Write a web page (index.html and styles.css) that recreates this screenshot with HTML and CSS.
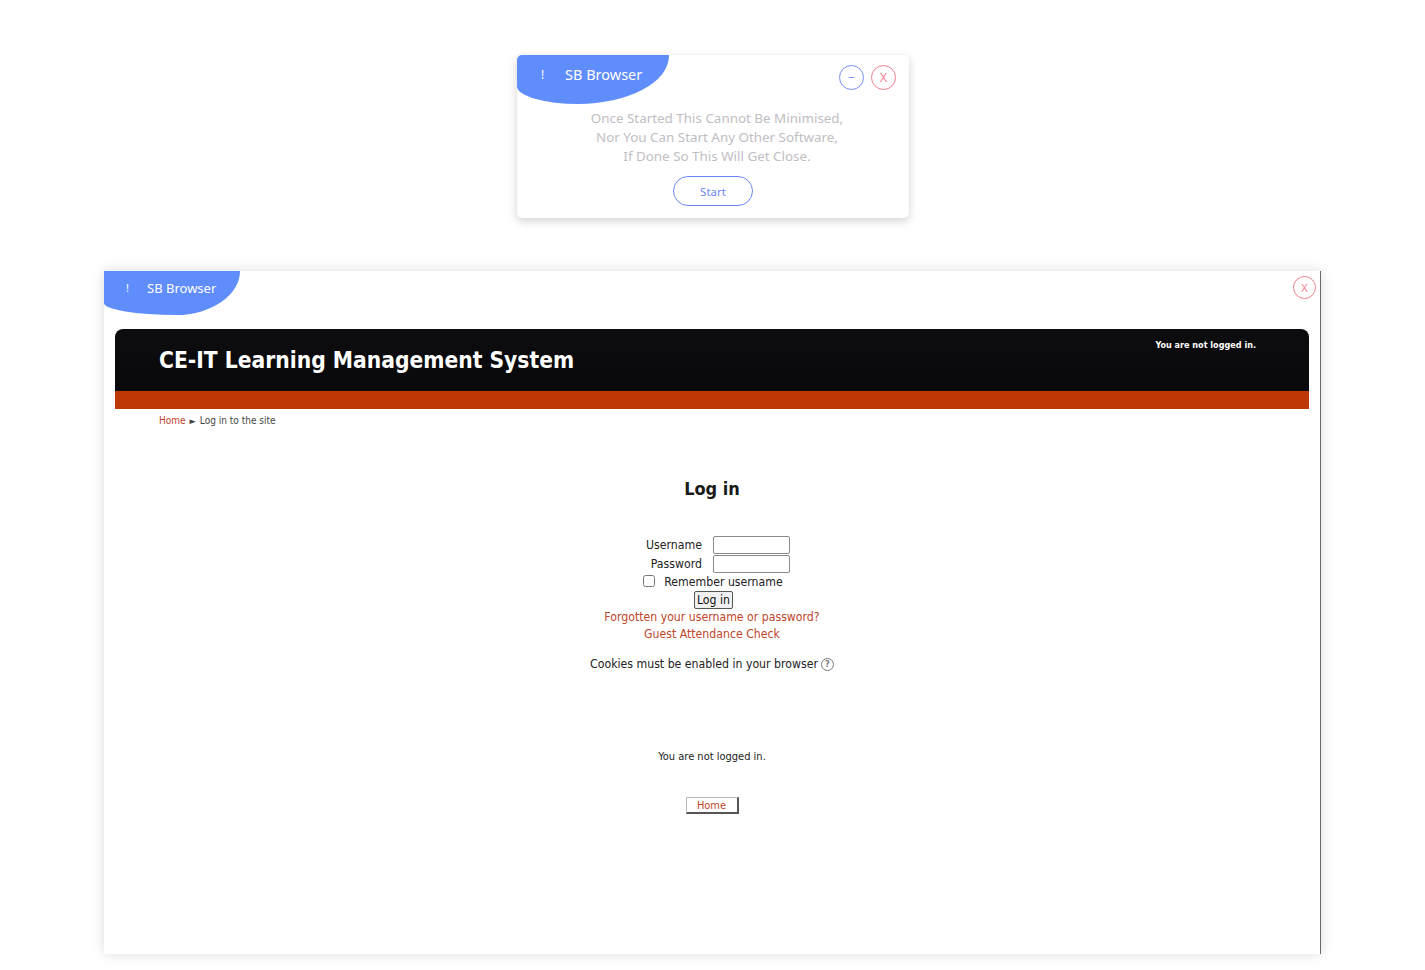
FILE: index.html
```html
<!DOCTYPE html>
<html lang="en">
<head>
<meta charset="utf-8">
<title>SB Browser</title>
<link rel="stylesheet" href="styles.css">
</head>
<body>
<div class="stage">
  <section class="dlg dlg-start">
    <div class="bar">
      <div class="brand brand-lg"><span class="bang">!</span><span class="brand-name">SB Browser</span></div>
      <div class="ctrls">
        <span class="cbtn cbtn-min">&minus;</span>
        <span class="cbtn cbtn-close">X</span>
      </div>
    </div>
    <p class="warn">Once Started This Cannot Be Minimised,<br>Nor You Can Start Any Other Software,<br>If Done So This Will Get Close.</p>
    <div class="start-row"><button class="start-btn">Start</button></div>
  </section>

  <section class="dlg dlg-main">
    <div class="bar bar-main">
      <div class="brand brand-sm"><span class="bang">!</span><span class="brand-name">SB Browser</span></div>
      <div class="ctrls ctrls-main">
        <span class="cbtn cbtn-close cbtn-sm">X</span>
      </div>
    </div>
    <div class="page">
      <header class="site-head">
        <div class="site-top">
          <h1 class="site-title">CE-IT Learning Management System</h1>
          <div class="site-login">You are not logged in.</div>
        </div>
        <div class="site-band"></div>
      </header>
      <nav class="crumbs"><a class="crumb-link">Home</a><span class="crumb-sep">&#9658;</span><span>Log in to the site</span></nav>
      <main class="content">
        <h2 class="login-title">Log in</h2>
        <form class="login-form">
          <div class="fields">
            <label class="flabel">Username</label><input class="finput" type="text">
            <label class="flabel">Password</label><input class="finput" type="password">
          </div>
          <label class="remember"><input type="checkbox" class="rcheck"><span>Remember username</span></label>
          <div class="submit-row"><button type="button" class="login-btn">Log in</button></div>
          <a class="olink">Forgotten your username or password?</a>
          <a class="olink">Guest Attendance Check</a>
          <p class="cookies">Cookies must be enabled in your browser <span class="help">?</span></p>
        </form>
        <p class="foot-login">You are not logged in.</p>
        <div class="home-row"><button class="home-btn">Home</button></div>
      </main>
    </div>
  </section>
</div>
</body>
</html>
```

FILE: styles.css
```css
html, body {
  margin: 0;
  padding: 0;
  background: #ffffff;
}
body {
  width: 1425px;
  height: 970px;
  overflow: hidden;
  font-family: "Noto Sans", "Open Sans", sans-serif;
}
.stage {
  display: flex;
  flex-direction: column;
  align-items: flex-start;
}
.dlg {
  background: #fff;
  overflow: hidden;
  box-sizing: border-box;
}
.dlg-start {
  margin: 55px 0 0 517px;
  width: 392px;
  height: 163px;
  border-radius: 5px;
  box-shadow: 0 3px 10px rgba(0, 0, 0, 0.18);
}
.dlg-main {
  margin: 53px 0 0 104px;
  width: 1217px;
  height: 683px;
  border-right: 1px solid #6a6a6a;
  box-shadow: 0 0 12px rgba(0, 0, 0, 0.14);
}
.bar {
  display: flex;
  justify-content: space-between;
  align-items: flex-start;
}
.brand {
  background: #5f8dfc;
  color: #fff;
  display: flex;
  align-items: flex-start;
  box-sizing: border-box;
}
.brand-lg {
  width: 152px;
  height: 49px;
  border-radius: 0 0 92px 62px / 0 0 49px 18px;
  padding: 10px 0 0 24px;
  font-size: 14.5px;
  line-height: 19px;
}
.brand-lg .bang { width: 24px; font-size: 12px; }
.brand-sm {
  width: 136px;
  height: 44px;
  border-radius: 0 0 64px 72px / 0 0 44px 12px;
  padding: 8px 0 0 22px;
  font-size: 13px;
  line-height: 18px;
}
.brand-sm .bang { width: 21px; font-size: 11px; }
.ctrls {
  display: flex;
  gap: 7px;
  padding: 10px 13px 0 0;
}
.ctrls-main { padding: 5px 4px 0 0; }
.cbtn {
  width: 25px;
  height: 25px;
  box-sizing: border-box;
  border-radius: 50%;
  display: flex;
  align-items: center;
  justify-content: center;
  font-size: 12px;
  font-family: "Noto Sans", sans-serif;
}
.cbtn-min {
  border: 1.5px solid #7c8ff8;
  color: #7c8ff8;
}
.cbtn-close {
  border: 1.5px solid #f0808f;
  color: #f0808f;
}
.cbtn-sm {
  width: 23px;
  height: 23px;
  font-size: 11px;
}
.warn {
  margin: 5px 0 0;
  padding-left: 8px;
  text-align: center;
  color: #bfbec3;
  font-size: 13.4px;
  line-height: 19px;
}
.start-row {
  display: flex;
  justify-content: center;
  padding-top: 10px;
}
.start-btn {
  width: 80px;
  height: 30px;
  border: 1px solid #6d87f6;
  border-radius: 15px;
  background: #fff;
  color: #6d87f6;
  font-family: "Noto Sans", sans-serif;
  font-size: 11.5px;
  padding: 0;
}

/* page */
.page {
  padding: 14px 11px 0;
  font-family: "DejaVu Sans Condensed", "DejaVu Sans", sans-serif;
  font-stretch: condensed;
}
.site-top {
  height: 62px;
  background: linear-gradient(180deg, #0d0c0e 0%, #09080a 100%);
  border-radius: 8px 8px 0 0;
  display: flex;
  justify-content: space-between;
  align-items: flex-start;
  padding: 0 53px 0 44px;
}
.site-title {
  margin: 17px 0 0;
  color: #fff;
  font-size: 22.6px;
  line-height: 28px;
  font-weight: bold;
}
.site-login {
  color: #fff;
  font-size: 9px;
  font-weight: bold;
  margin-top: 10px;
  line-height: 12px;
}
.site-band {
  height: 18px;
  background: #bd3805;
}
.crumbs {
  margin: 5px 0 0 44px;
  font-size: 10px;
  line-height: 14px;
  color: #444;
  display: flex;
  align-items: center;
  gap: 4px;
}
.crumb-link { color: #c0402a; }
.crumb-sep { font-size: 9px; color: #444; }
.content {
  display: flex;
  flex-direction: column;
  align-items: center;
  color: #222;
  font-size: 12.2px;
}
.login-title {
  margin: 50px 0 0;
  font-size: 18px;
  line-height: 22px;
  font-weight: bold;
  color: #1a1a1a;
}
.login-form {
  margin-top: 36px;
  display: flex;
  flex-direction: column;
  align-items: center;
}
.fields {
  display: grid;
  grid-template-columns: auto 77px;
  column-gap: 11px;
  row-gap: 1px;
  align-items: center;
  margin-left: 12px;
}
.flabel {
  text-align: right;
  line-height: 18px;
}
.finput {
  width: 77px;
  height: 18px;
  box-sizing: border-box;
  border: 1px solid #8a8a8a;
  border-radius: 2px;
  padding: 0;
  margin: 0;
}
.remember {
  display: flex;
  align-items: center;
  gap: 9px;
  line-height: 17px;
  margin-top: 1px;
  margin-left: 2px;
}
.rcheck {
  width: 12px;
  height: 12px;
  margin: 0;
  transform: translateY(-2px);
}
.submit-row { margin-top: 0; margin-left: 3px; }
.login-btn {
  height: 18px;
  padding: 0 2px;
  font-family: inherit;
  font-size: 12.2px;
  line-height: 14px;
  border: 1px solid #555;
  border-radius: 2px;
  background: #f1f1f1;
  color: #111;
}
.olink {
  color: #c0452a;
  line-height: 17px;
}
.cookies {
  margin: 13px 0 0;
  line-height: 17px;
  display: flex;
  align-items: center;
  gap: 3px;
}
.help {
  width: 13px;
  height: 13px;
  box-sizing: border-box;
  border: 1px solid #777;
  border-radius: 50%;
  color: #777;
  font-size: 9px;
  line-height: 11px;
  display: inline-flex;
  justify-content: center;
  font-weight: bold;
}
.foot-login {
  margin: 75px 0 0;
  font-size: 11px;
  line-height: 17px;
}
.home-row { margin-top: 32px; }
.home-btn {
  width: 53px;
  height: 17px;
  padding: 0;
  font-family: inherit;
  font-size: 11px;
  line-height: 13px;
  color: #c0452a;
  background: #fff;
  border: 1px solid #bbb;
  border-right-color: #555;
  border-bottom-color: #555;
  border-width: 1px 2px 2px 1px;
}
```
